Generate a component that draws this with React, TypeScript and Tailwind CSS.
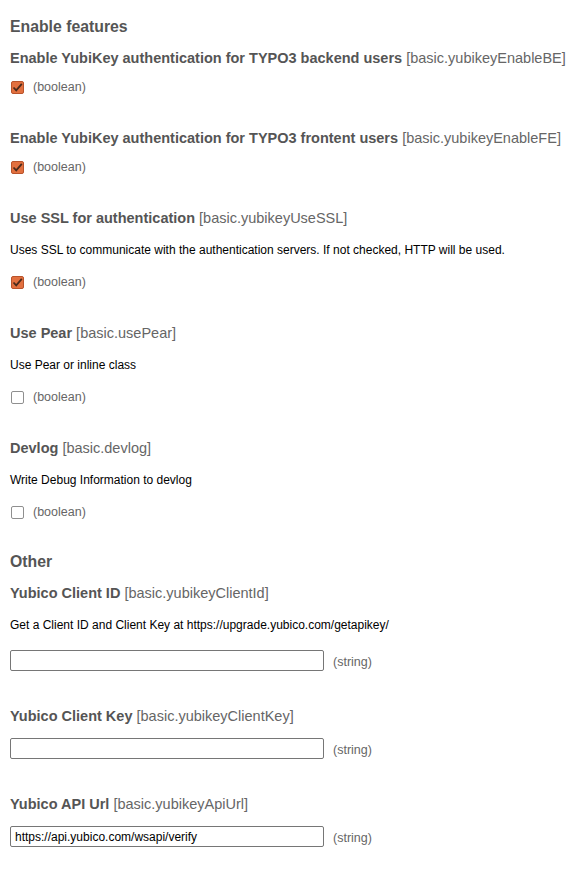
import React from "react";

const font = { fontFamily: '"Liberation Sans", Arial, sans-serif' };

type Field = {
  label: string;
  key: string;
  desc?: string;
  type: "boolean" | "string";
  checked?: boolean;
  value?: string;
};

const features: Field[] = [
  { label: "Enable YubiKey authentication for TYPO3 backend users", key: "basic.yubikeyEnableBE", type: "boolean", checked: true },
  { label: "Enable YubiKey authentication for TYPO3 frontent users", key: "basic.yubikeyEnableFE", type: "boolean", checked: true },
  { label: "Use SSL for authentication", key: "basic.yubikeyUseSSL", desc: "Uses SSL to communicate with the authentication servers. If not checked, HTTP will be used.", type: "boolean", checked: true },
  { label: "Use Pear", key: "basic.usePear", desc: "Use Pear or inline class", type: "boolean" },
  { label: "Devlog", key: "basic.devlog", desc: "Write Debug Information to devlog", type: "boolean" },
];

const other: Field[] = [
  { label: "Yubico Client ID", key: "basic.yubikeyClientId", desc: "Get a Client ID and Client Key at https://upgrade.yubico.com/getapikey/", type: "string" },
  { label: "Yubico Client Key", key: "basic.yubikeyClientKey", type: "string" },
  { label: "Yubico API Url", key: "basic.yubikeyApiUrl", type: "string", value: "https://api.yubico.com/wsapi/verify" },
];

function Check({ checked }: { checked?: boolean }) {
  if (checked) {
    return (
      <span className="ml-[11px] w-[13px] h-[13px] rounded-[2px] bg-[#e2703f] border border-[#b9532b] flex items-center justify-center">
        <svg width="11" height="11" viewBox="0 0 11 11">
          <path d="M1.5 5.5 L4.2 8.3 L9.8 1.8" fill="none" stroke="#4a2a1c" strokeWidth="1.8" />
        </svg>
      </span>
    );
  }
  return <span className="ml-[11px] w-[13px] h-[13px] rounded-[2px] bg-white border border-[#8f8f8f]" />;
}

function Item({ f, first }: { f: Field; first?: boolean }) {
  return (
    <div className={first ? "mt-[11px]" : f.type === "string" ? "mt-[35px]" : "mt-[33px]"}>
      <div className="text-[14.5px] leading-[20px] px-[10px] text-[#555] whitespace-nowrap">
        <span className="font-bold">{f.label}</span> <span className="text-[#666]">[{f.key}]</span>
      </div>
      {f.desc && (
        <div className="mt-[14px] px-[10px] text-[12px] leading-[16px] text-black">{f.desc}</div>
      )}
      {f.type === "boolean" ? (
        <div className={`flex items-center h-[16px] leading-[16px] ${f.desc ? "mt-[16px]" : "mt-[11px]"}`}>
          <Check checked={f.checked} />
          <span className="ml-[9px] text-[12.5px] leading-[16px] text-[#666]">(boolean)</span>
        </div>
      ) : (
        <div className={`flex items-center ${f.desc ? "mt-[17px]" : "mt-[12px]"}`}>
          <input
            readOnly
            value={f.value ?? ""}
            className="ml-[10px] w-[314px] h-[21px] border border-[#767676] rounded-[2px] bg-white px-[4px] text-[12px] text-black outline-none"
            style={font}
          />
          <span className="ml-[9px] text-[12.5px] leading-[16px] text-[#666] mt-[2px]">(string)</span>
        </div>
      )}
    </div>
  );
}

export default function App() {
  return (
    <div className="w-[584px] h-[870px] bg-white pt-[17px]" style={font}>
      <h2 className="px-[10px] text-[15.8px] leading-[20px] font-bold text-[#555]">Enable features</h2>
      {features.map((f, i) => (
        <Item key={f.key} f={f} first={i === 0} />
      ))}
      <h2 className="mt-[32px] px-[10px] text-[15.8px] leading-[20px] font-bold text-[#555]">Other</h2>
      {other.map((f, i) => (
        <Item key={f.key} f={f} first={i === 0} />
      ))}
    </div>
  );
}
